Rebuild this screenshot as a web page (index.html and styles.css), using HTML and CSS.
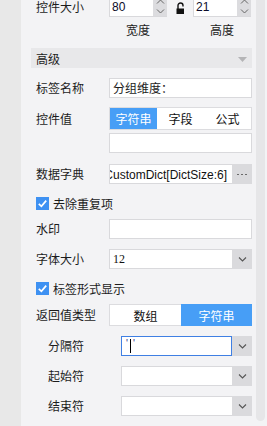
FILE: index.html
```html
<!DOCTYPE html>
<html lang="zh">
<head>
<meta charset="utf-8">
<link rel="stylesheet" href="styles.css">
</head>
<body>
<div class="app">
  <div class="gutter"></div>
  <div class="panel">
    <div class="row first">
      <span class="label">控件大小</span>
      <div class="size-fields">
        <div class="spin">
          <span class="val">80</span>
          <div class="spin-btns">
            <svg width="9" height="5" viewBox="0 0 9 5"><path d="M1 4.5 L4.5 1 L8 4.5" fill="none" stroke="#666" stroke-width="1"/></svg>
            <svg width="9" height="5" viewBox="0 0 9 5"><path d="M1 0.5 L4.5 4 L8 0.5" fill="none" stroke="#666" stroke-width="1"/></svg>
          </div>
        </div>
        <div class="lock">
          <svg width="9" height="12" viewBox="0 0 9 12"><path d="M2 7 V3.5 A2.5 2.5 0 0 1 7 3.5 V4.5" fill="none" stroke="#111" stroke-width="1.4"/><rect x="0.5" y="6.5" width="7.5" height="5.5" fill="#111"/></svg>
        </div>
        <div class="spin">
          <span class="val">21</span>
          <div class="spin-btns">
            <svg width="9" height="5" viewBox="0 0 9 5"><path d="M1 4.5 L4.5 1 L8 4.5" fill="none" stroke="#666" stroke-width="1"/></svg>
            <svg width="9" height="5" viewBox="0 0 9 5"><path d="M1 0.5 L4.5 4 L8 0.5" fill="none" stroke="#666" stroke-width="1"/></svg>
          </div>
        </div>
      </div>
    </div>
    <div class="captions"><span>宽度</span><span>高度</span></div>

    <div class="section-head">
      <span>高级</span>
      <svg width="9" height="5" viewBox="0 0 9 5"><path d="M0 0 H9 L4.5 5 Z" fill="#b4b4b6"/></svg>
    </div>

    <div class="row gap10">
      <span class="label">标签名称</span>
      <div class="input"><span class="txt">分组维度：</span></div>
    </div>

    <div class="row gap9 tall">
      <span class="label">控件值</span>
      <div class="seg three">
        <span class="on">字符串</span><span>字段</span><span>公式</span>
      </div>
    </div>
    <div class="row gap3">
      <span></span>
      <div class="input"></div>
    </div>

    <div class="row gap11">
      <span class="label">数据字典</span>
      <div class="input combo">
        <div class="clip-rtl"><span class="latin">CustomDict[DictSize:6]</span></div>
        <div class="btn dots"><i></i><i></i><i></i></div>
      </div>
    </div>

    <div class="check-row gap10">
      <span class="box"><svg width="13" height="13" viewBox="0 0 13 13"><path d="M2.8 6.8 L5.4 9.3 L10.2 3.6" fill="none" stroke="#fff" stroke-width="1.7"/></svg></span>
      <span>去除重复项</span>
    </div>

    <div class="row gap7">
      <span class="label">水印</span>
      <div class="input"></div>
    </div>

    <div class="row gap10">
      <span class="label">字体大小</span>
      <div class="input combo">
        <div class="clip left"><span class="num">12</span></div>
        <div class="btn"><svg width="9" height="5" viewBox="0 0 9 5"><path d="M1 0.5 L4.5 4 L8 0.5" fill="none" stroke="#555" stroke-width="1.1"/></svg></div>
      </div>
    </div>

    <div class="check-row gap10">
      <span class="box"><svg width="13" height="13" viewBox="0 0 13 13"><path d="M2.8 6.8 L5.4 9.3 L10.2 3.6" fill="none" stroke="#fff" stroke-width="1.7"/></svg></span>
      <span>标签形式显示</span>
    </div>

    <div class="row gap7 seg-row">
      <span class="label">返回值类型</span>
      <div class="seg two">
        <span>数组</span><span class="on">字符串</span>
      </div>
    </div>

    <div class="row sub gap10">
      <span class="label">分隔符</span>
      <div class="input combo">
        <div class="clip left focus"><span class="sep">'<b class="caret"></b>'</span></div>
        <div class="btn"><svg width="9" height="5" viewBox="0 0 9 5"><path d="M1 0.5 L4.5 4 L8 0.5" fill="none" stroke="#555" stroke-width="1.1"/></svg></div>
      </div>
    </div>

    <div class="row sub gap10">
      <span class="label">起始符</span>
      <div class="input combo">
        <div class="clip left"></div>
        <div class="btn"><svg width="9" height="5" viewBox="0 0 9 5"><path d="M1 0.5 L4.5 4 L8 0.5" fill="none" stroke="#555" stroke-width="1.1"/></svg></div>
      </div>
    </div>

    <div class="row sub gap10">
      <span class="label">结束符</span>
      <div class="input combo">
        <div class="clip left"></div>
        <div class="btn"><svg width="9" height="5" viewBox="0 0 9 5"><path d="M1 0.5 L4.5 4 L8 0.5" fill="none" stroke="#555" stroke-width="1.1"/></svg></div>
      </div>
    </div>
  </div>
  <div class="scroll-col"><div class="thumb"></div></div>
</div>
</body>
</html>
```
FILE: styles.css
```css
* { box-sizing: border-box; }
html, body {
  margin: 0;
  padding: 0;
  width: 267px;
  height: 426px;
  overflow: hidden;
  background: #f3f3f5;
  font-family: "Noto Sans CJK SC", "Liberation Sans", sans-serif;
  font-size: 12px;
  color: #1c1c1c;
}
.app {
  display: flex;
  width: 267px;
  height: 426px;
}
.gutter {
  width: 21px;
  flex: none;
  background: #e8e8e8;
}
.panel {
  width: 235px;
  flex: none;
  padding: 0 4px 0 10px;
  overflow: hidden;
}
.scroll-col {
  width: 11px;
  flex: none;
  padding-right: 2px;
}
.thumb {
  width: 9px;
  height: 421px;
  background: #e6e6e8;
  border-radius: 0 0 5px 5px;
}

.row {
  display: grid;
  grid-template-columns: 78px minmax(0, 1fr);
  height: 20px;
  align-items: center;
}
.row.sub { grid-template-columns: 90px minmax(0, 1fr); }
.row.sub .label { padding-left: 17px; }
.row.tall { height: 23px; }
.row.seg-row { height: 22px; }
.first { margin-top: -3px; }
.gap3 { margin-top: 3px; }
.gap7 { margin-top: 7px; }
.gap9 { margin-top: 9px; }
.gap10 { margin-top: 10px; }
.gap11 { margin-top: 11px; }

.label {
  padding-left: 5px;
  line-height: 20px;
  white-space: nowrap;
}

.size-fields {
  display: flex;
  height: 20px;
}
.spin {
  width: 58px;
  height: 20px;
  display: flex;
  background: #fff;
  border: 1px solid #d9d9dc;
  border-right: none;
}
.spin .val {
  flex: 1;
  padding-left: 2px;
  font-family: "Liberation Sans", sans-serif;
  font-size: 12px;
  line-height: 18px;
  color: #0c0c2a;
}
.spin-btns {
  width: 14px;
  background: #dcdcdf;
  display: flex;
  flex-direction: column;
  justify-content: space-between;
  align-items: center;
  padding: 1px 0 2px;
}
.spin-btns svg { display: block; }
.lock {
  width: 26px;
  display: flex;
  justify-content: center;
  align-items: flex-start;
  padding-top: 5px;
  padding-left: 1px;
}
.lock svg { display: block; }

.captions {
  display: flex;
  margin-top: 5px;
  height: 16px;
  line-height: 16px;
}
.captions span:first-child {
  margin-left: 78px;
  width: 58px;
  text-align: center;
}
.captions span:last-child {
  margin-left: 26px;
  width: 58px;
  text-align: center;
}

.section-head {
  margin-top: 10px;
  height: 20px;
  background: #e8e8ea;
  display: flex;
  align-items: center;
  justify-content: space-between;
  padding: 0 5px 0 5px;
}
.section-head svg { display: block; margin-top: 3px; }

.input {
  width: 100%;
  min-width: 0;
  height: 20px;
  background: #fff;
  border: 1px solid #d9d9dc;
  display: flex;
  align-items: center;
}
.input .txt {
  padding-left: 3px;
  line-height: 18px;
}
.clip {
  flex: 1;
  min-width: 0;
  height: 18px;
  overflow: hidden;
  display: flex;
  align-items: center;
}
.clip.left {
  justify-content: flex-start;
  padding: 0 0 0 3px;
}
.clip-rtl {
  flex: 1 1 0;
  width: 0;
  min-width: 0;
  height: 18px;
  overflow: hidden;
  direction: rtl;
  text-align: right;
  white-space: nowrap;
  padding-right: 5px;
  line-height: 18px;
}
.clip.focus {
  height: 20px;
  margin: -1px 0 -1px -1px;
  border: 1px solid #3f7fe3;
  padding-left: 4px;
}
.latin {
  direction: ltr;
  unicode-bidi: isolate;
  font-family: "Liberation Sans", sans-serif;
  font-size: 12px;
  white-space: nowrap;
  color: #111;
}
.num {
  font-family: "Liberation Serif", serif;
  font-size: 12px;
  color: #111;
}
.sep {
  font-family: "Liberation Sans", sans-serif;
  font-size: 10px;
  color: #2b2b8a;
  display: flex;
  align-items: flex-start;
  height: 14px;
  line-height: 10px;
}
.caret {
  display: inline-block;
  width: 1px;
  height: 14px;
  background: #000;
  margin: 0 2px;
}
.btn {
  width: 20px;
  flex: none;
  align-self: stretch;
  margin: -1px -1px -1px 0;
  background: #dadadd;
  display: flex;
  align-items: center;
  justify-content: center;
}
.btn svg { display: block; }
.dots { gap: 2px; }
.dots i {
  display: block;
  width: 2px;
  height: 1px;
  background: #6a6a6a;
}

.seg {
  display: flex;
  height: 100%;
  border: 1px solid #dcdcdf;
  background: #fff;
}
.seg span {
  flex: 1;
  display: flex;
  align-items: center;
  justify-content: center;
  color: #111;
}
.seg .on {
  background: #479ef6;
  color: #fff;
}
.seg.two .on { margin: -1px -1px -1px 0; }

.check-row {
  display: flex;
  align-items: center;
  height: 18px;
  padding-left: 5px;
  gap: 4px;
}
.box {
  width: 13px;
  height: 13px;
  background: #3e91f2;
  display: block;
}
.box svg { display: block; }
```
